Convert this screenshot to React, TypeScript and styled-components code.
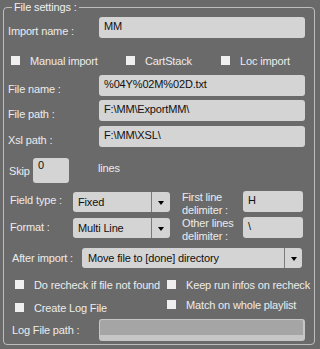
import React from "react";
import styled, { createGlobalStyle } from "styled-components";

const Global = createGlobalStyle`
  html, body { margin: 0; padding: 0; }
  body {
    background: #6a6a6a;
    font-family: "Liberation Sans", Arial, sans-serif;
    font-size: 11px;
    letter-spacing: -0.15px;
    color: #ececec;
  }
  * { box-sizing: border-box; }
`;

const Frame = styled.fieldset`
  margin: 0 0 0 3px;
  width: 312px;
  border: 1px solid #bdbdbd;
  border-radius: 4px;
  padding: 0 0 3px 4px;
  min-width: 0;
`;

const Legend = styled.legend`
  margin-left: 4px;
  padding: 0 2px;
  line-height: 14px;
  font-size: 11px;
  color: #f0f0f0;
`;

const Row = styled.div<{ $mt: number; $pl?: number }>`
  display: flex;
  align-items: flex-start;
  margin-top: ${(p) => p.$mt}px;
  padding-left: ${(p) => p.$pl ?? 0}px;
`;

const Label = styled.div<{ $w?: number; $pt?: number; $ml?: number }>`
  width: ${(p) => (p.$w ? `${p.$w}px` : "auto")};
  flex: none;
  padding-top: ${(p) => p.$pt ?? 0}px;
  margin-left: ${(p) => p.$ml ?? 0}px;
  line-height: 13px;
  white-space: nowrap;
`;

const TwoLineLabel = styled.div<{ $w: number }>`
  width: ${(p) => p.$w}px;
  flex: none;
  line-height: 13px;
`;

const TextBox = styled.div<{ $w: number; $h?: number; $pt?: number; $mt?: number; $pl?: number }>`
  width: ${(p) => p.$w}px;
  height: ${(p) => p.$h ?? 21}px;
  flex: none;
  margin-top: ${(p) => p.$mt ?? 0}px;
  background: #d4d4d4;
  border-radius: 3px;
  color: #111;
  line-height: 13px;
  padding: ${(p) => p.$pt ?? 3}px 0 0 ${(p) => p.$pl ?? 5}px;
  white-space: nowrap;
  overflow: hidden;
`;

const DisabledBox = styled.div`
  width: 206px;
  height: 22px;
  flex: none;
  background: #a5a5a5;
  border: 1px solid #c6c6c6;
  border-bottom-width: 6px;
  border-right-width: 2px;
  border-radius: 3px;
`;

const Combo = styled.div<{ $w: number; $mt?: number; $pl?: number }>`
  width: ${(p) => p.$w}px;
  height: 20px;
  flex: none;
  margin-top: ${(p) => p.$mt ?? 0}px;
  display: flex;
  background: #d4d4d4;
  border-radius: 3px;
  color: #111;
  overflow: hidden;
`;

const ComboText = styled.div<{ $pl: number }>`
  flex: 1;
  line-height: 20px;
  padding-left: ${(p) => p.$pl}px;
  white-space: nowrap;
`;

const ComboButton = styled.div<{ $w: number }>`
  width: ${(p) => p.$w}px;
  flex: none;
  border-left: 1px solid #7a7a7a;
  display: flex;
  align-items: center;
  justify-content: center;
  &::after {
    content: "";
    width: 0;
    height: 0;
    margin-top: 1px;
    border-left: 3.5px solid transparent;
    border-right: 3.5px solid transparent;
    border-top: 4px solid #000;
  }
`;

const CheckGrid = styled.div<{ $cols: string; $mt: number; $pl: number }>`
  display: grid;
  grid-template-columns: ${(p) => p.$cols};
  margin-top: ${(p) => p.$mt}px;
  padding-left: ${(p) => p.$pl}px;
  align-items: start;
`;

const CheckColumn = styled.div<{ $gap: number }>`
  display: flex;
  flex-direction: column;
  gap: ${(p) => p.$gap}px;
`;

const Check = styled.div<{ $gap?: number }>`
  display: flex;
  align-items: baseline;
  gap: ${(p) => p.$gap ?? 10}px;
  line-height: 13px;
  white-space: nowrap;
`;

const Box = styled.span`
  display: inline-block;
  width: 9px;
  height: 9px;
  flex: none;
  background: #efefef;
`;

function CheckItem({ label, gap }: { label: string; gap?: number }) {
  return (
    <Check $gap={gap}>
      <Box />
      <span>{label}</span>
    </Check>
  );
}

export default function App() {
  return (
    <>
      <Global />
      <Frame>
        <Legend>File settings :</Legend>

        <Row $mt={3}>
          <Label $w={91} $pt={8}>Import name :</Label>
          <TextBox $w={206}>MM</TextBox>
        </Row>

        <CheckGrid $cols="115px 95px 1fr" $mt={17} $pl={3}>
          <CheckItem label="Manual import" />
          <CheckItem label="CartStack" />
          <CheckItem label="Loc import" />
        </CheckGrid>

        <Row $mt={7}>
          <Label $w={91} $pt={8}>File name :</Label>
          <TextBox $w={206}>%04Y%02M%02D.txt</TextBox>
        </Row>
        <Row $mt={4}>
          <Label $w={91} $pt={8}>File path :</Label>
          <TextBox $w={206}>F:\MM\ExportMM\</TextBox>
        </Row>
        <Row $mt={5}>
          <Label $w={91} $pt={8}>Xsl path :</Label>
          <TextBox $w={206}>F:\MM\XSL\</TextBox>
        </Row>

        <Row $mt={11}>
          <Label $w={24} $pt={7} $ml={1}>Skip</Label>
          <TextBox $w={36} $h={25} $pt={1}>0</TextBox>
          <Label $pt={4} $ml={29}>lines</Label>
        </Row>

        <Row $mt={8} $pl={2}>
          <Label $w={63} $pt={3}>Field type :</Label>
          <Combo $w={97} $mt={1}>
            <ComboText $pl={5}>Fixed</ComboText>
            <ComboButton $w={19} />
          </Combo>
          <TwoLineLabel $w={61} style={{ marginLeft: 12 }}>
            First line
            <br />
            delimiter :
          </TwoLineLabel>
          <TextBox $w={60}>H</TextBox>
        </Row>
        <Row $mt={0} $pl={2}>
          <Label $w={63} $pt={4}>Format :</Label>
          <Combo $w={97} $mt={1}>
            <ComboText $pl={5}>Multi Line</ComboText>
            <ComboButton $w={19} />
          </Combo>
          <TwoLineLabel $w={61} style={{ marginLeft: 12 }}>
            Other lines
            <br />
            delimiter :
          </TwoLineLabel>
          <TextBox $w={60}>\</TextBox>
        </Row>

        <Row $mt={5} $pl={4}>
          <Label $w={70} $pt={4}>After import :</Label>
          <Combo $w={220}>
            <ComboText $pl={6}>Move file to [done] directory</ComboText>
            <ComboButton $w={18} />
          </Combo>
        </Row>

        <CheckGrid $cols="152px 1fr" $mt={11} $pl={7}>
          <CheckColumn $gap={10}>
            <CheckItem label="Do recheck if file not found" />
            <CheckItem label="Create Log File" />
          </CheckColumn>
          <CheckColumn $gap={7}>
            <CheckItem label="Keep run infos on recheck" />
            <CheckItem label="Match on whole playlist" />
          </CheckColumn>
        </CheckGrid>

        <Row $mt={4} $pl={4}>
          <Label $w={87} $pt={5}>Log File path :</Label>
          <DisabledBox />
        </Row>
      </Frame>
    </>
  );
}
